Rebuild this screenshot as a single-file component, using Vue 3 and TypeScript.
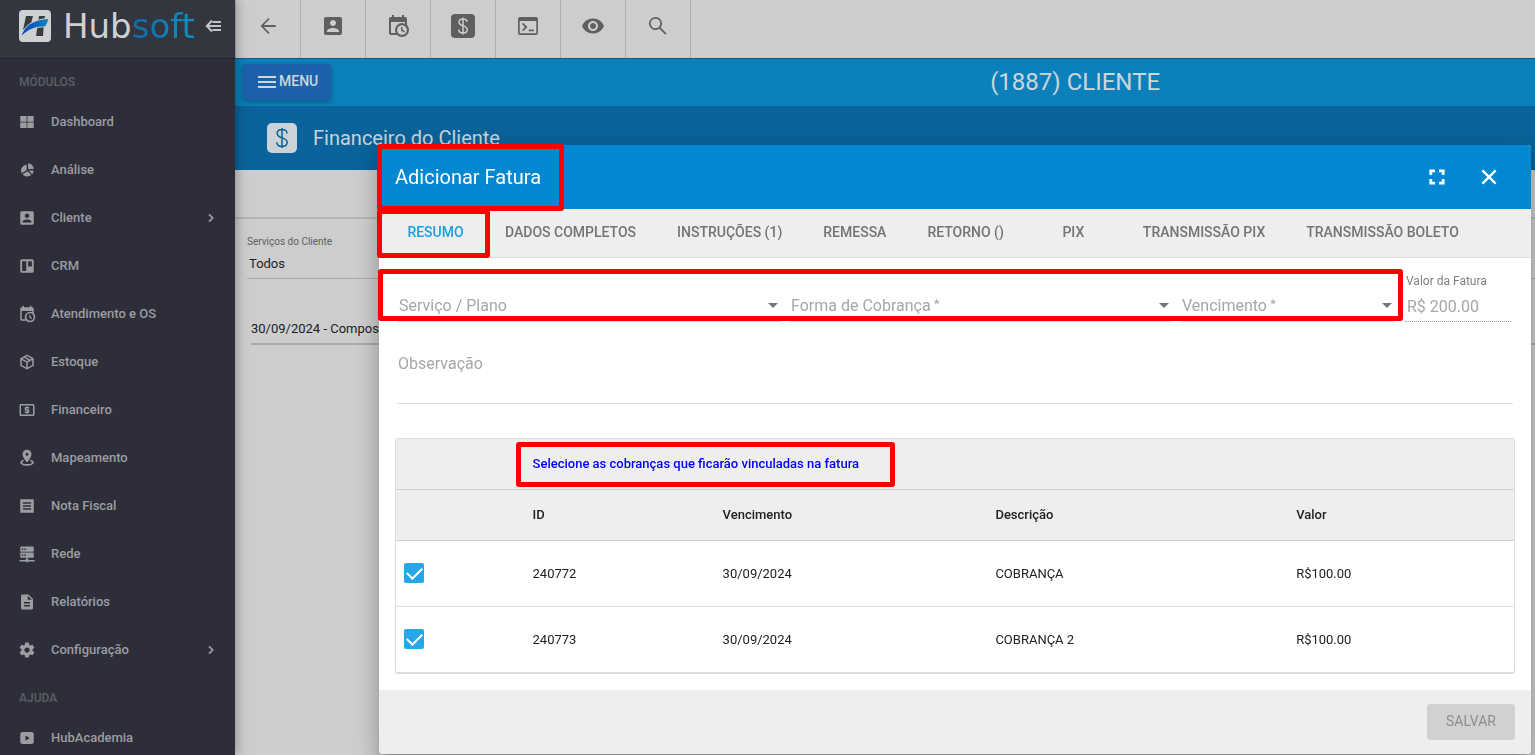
<script setup lang="ts">
import { ref } from 'vue'

interface NavItem {
  label: string
  icon: string
  expandable?: boolean
}

interface Charge {
  id: number
  due: string
  description: string
  amount: string
  selected: boolean
}

const icons: Record<string, string> = {
  dashboard: 'M3 4h8.500v7.500H3zM12.500 4H21v7.500h-8.500zM3 12.500h8.500V20H3zM12.500 12.500H21V20h-8.500z',
  chart: 'M13.500 3v7.500H21A8 8 0 0 0 13.500 3M11.500 4.500v7.800l-6.700 3.900A8.300 8.300 0 0 1 11.500 4.500M13 13.500l4.800 5.300A8.500 8.500 0 0 1 5.800 17.700zM14.500 12.500h6.300a8.500 8.500 0 0 1-2 5z',
  account:
    'M3 5v14c0 1.100.890 2 2 2h14c1.100 0 2-.900 2-2V5c0-1.100-.900-2-2-2H5c-1.110 0-2 .900-2 2zm12 4c0 1.660-1.340 3-3 3s-3-1.340-3-3 1.340-3 3-3 3 1.340 3 3zm-9 8c0-2 4-3.100 6-3.100s6 1.100 6 3.100v1H6v-1z',
  board:
    'M5 3h14a2 2 0 0 1 2 2v14a2 2 0 0 1-2 2H5a2 2 0 0 1-2-2V5a2 2 0 0 1 2-2zM5.500 5.500v13h5.500v-13zM13.500 5.500v7h5v-7z',
  calendar:
    'M15,13H16.5V15.82L18.94,17.23L18.19,18.53L15,16.69V13M19,8H5V19H9.67C9.24,18.09 9,17.07 9,16A7,7 0 0,1 16,9C17.07,9 18.09,9.24 19,9.67V8M5,21C3.89,21 3,20.1 3,19V5C3,3.89 3.89,3 5,3H6V1H8V3H16V1H18V3H19A2,2 0 0,1 21,5V11.1C22.24,12.36 23,14.09 23,16A7,7 0 0,1 16,23C14.09,23 12.36,22.24 11.1,21H5M16,11.15A4.85,4.85 0 0,0 11.15,16C11.15,18.68 13.32,20.85 16,20.85A4.85,4.85 0 0,0 20.85,16C20.85,13.32 18.68,11.15 16,11.15Z',
  box: 'M21,16.5C21,16.88 20.79,17.21 20.47,17.38L12.57,21.82C12.41,21.94 12.21,22 12,22C11.79,22 11.59,21.94 11.43,21.82L3.53,17.38C3.21,17.21 3,16.88 3,16.5V7.5C3,7.12 3.21,6.79 3.53,6.62L11.43,2.18C11.59,2.06 11.79,2 12,2C12.21,2 12.41,2.06 12.57,2.18L20.47,6.62C20.79,6.79 21,7.12 21,7.5V16.5M12,4.15L10.11,5.22L16,8.61L17.96,7.5L12,4.15M6.04,7.5L12,10.85L13.96,9.75L8.08,6.35L6.04,7.5M5,15.91L11,19.29V12.58L5,9.21V15.91M19,15.91V9.21L13,12.58V19.29L19,15.91Z',
  cash: 'M11 17h2v-1h1c.55 0 1-.45 1-1v-3c0-.55-.45-1-1-1h-3v-1h4V8h-2V7h-2v1h-1c-.55 0-1 .45-1 1v3c0 .55.45 1 1 1h3v1H9v2h2v1zm9-13H4c-1.110 0-1.990.890-1.990 2L2 18c0 1.110.890 2 2 2h16c1.110 0 2-.890 2-2V6c0-1.110-.890-2-2-2zm0 14H4V6h16v12z',
  pin: 'M12 1a6 6 0 0 0-6 6C6 11.500 12 18 12 18s6-6.500 6-11a6 6 0 0 0-6-6zm0 4a2 2 0 1 1 0 4 2 2 0 0 1 0-4zM7 14.200c-2.400.800-4 2.200-4 3.800 0 2.500 4 4.300 9 4.300s9-1.800 9-4.300c0-1.600-1.600-3-4-3.800l-1.200 1.700c1.900.500 2.700 1.200 2.700 2 0 1.200-3 2.200-6.500 2.200s-6.500-1-6.500-2.200c0-.800.800-1.500 2.700-2z',
  note: 'M3 3h18v18H3zM6.500 7v2h11V7zM6.500 11v2h11v-2zM6.500 15v2h11v-2z',
  server:
    'M4 2h16a1 1 0 0 1 1 1v5a1 1 0 0 1-1 1H4a1 1 0 0 1-1-1V3a1 1 0 0 1 1-1zM4 10h16a1 1 0 0 1 1 1v5a1 1 0 0 1-1 1h-7v2h1v1h8v2h-8l-1 1h-2l-1-1H2v-2h8v-1h1v-2H4a1 1 0 0 1-1-1v-5a1 1 0 0 1 1-1zM5 4.500v2h2v-2zM8.500 4.500v2h2v-2zM5 12.500v2h2v-2zM8.500 12.500v2h2v-2z',
  file: 'M14 2H6c-1.1 0-1.99.9-1.99 2L4 20c0 1.1.89 2 1.99 2H18c1.1 0 2-.9 2-2V8l-6-6zm2 16H8v-2h8v2zm0-4H8v-2h8v2zm-3-5V3.5L18.5 9H13z',
  gear: 'M19.43 12.98c.04-.32.07-.64.07-.98s-.03-.66-.07-.98l2.110-1.650c.190-.150.240-.420.120-.640l-2-3.460c-.120-.220-.390-.300-.610-.220l-2.490 1c-.520-.400-1.080-.730-1.690-.980l-.380-2.650C14.460 2.180 14.250 2 14 2h-4c-.250 0-.460.180-.490.420l-.380 2.650c-.610.250-1.170.590-1.690.980l-2.490-1c-.230-.090-.490 0-.610.220l-2 3.460c-.130.220-.070.490.120.640l2.110 1.650c-.040.320-.070.650-.070.980s.030.660.070.980l-2.110 1.650c-.190.150-.240.420-.120.640l2 3.460c.120.220.390.300.610.220l2.490-1c.520.400 1.080.730 1.690.980l.380 2.650c.030.240.240.420.490.420h4c.250 0 .460-.180.490-.420l.380-2.650c.610-.250 1.170-.590 1.690-.980l2.490 1c.230.090.490 0 .610-.220l2-3.460c.120-.220.070-.490-.120-.640l-2.110-1.650zM12 15.500c-1.930 0-3.500-1.570-3.500-3.500s1.570-3.500 3.500-3.500 3.500 1.570 3.500 3.500-1.570 3.500-3.500 3.500z',
  video: 'M6 4h12a3 3 0 0 1 3 3v10a3 3 0 0 1-3 3H6a3 3 0 0 1-3-3V7a3 3 0 0 1 3-3zM10 8.500v7l5.500-3.500z',
  back: 'M19.700 11.100H7.800l5.800-5.800-1.200-1.200L4.500 12l7.900 7.900 1.200-1.200-5.800-5.800h11.900z',
  terminal:
    'M4 3h16a2 2 0 0 1 2 2v14a2 2 0 0 1-2 2H4a2 2 0 0 1-2-2V5a2 2 0 0 1 2-2zM3.700 7v12.300h16.600V7zM7.200 8.800l4.300 4.200-4.300 4.200L6 16l3-3-3-3zM12.800 15.500h5v1.700h-5z',
  eye: 'M12 4.500C7 4.500 2.730 7.610 1 12c1.730 4.390 6 7.500 11 7.500s9.270-3.110 11-7.500c-1.730-4.390-6-7.500-11-7.500zM12 17c-2.760 0-5-2.240-5-5s2.240-5 5-5 5 2.240 5 5-2.240 5-5 5zm0-8c-1.660 0-3 1.340-3 3s1.340 3 3 3 3-1.340 3-3-1.340-3-3-3z',
  search:
    'M9.500 3a6.500 6.500 0 0 1 5.100 10.500l6 6-1.200 1.200-6-6A6.500 6.500 0 1 1 9.500 3zm0 1.700a4.800 4.800 0 1 0 0 9.600 4.800 4.800 0 0 0 0-9.600z',
  chevron: 'M8.200 16.600 12.800 12 8.200 7.400 10 5.600l6.400 6.400-6.400 6.400z',
  fullscreen: 'M7.200 14H4.400v5.600H10v-2.800H7.200zM4.400 10h2.800V7.200H10V4.400H4.400zM16.800 16.800H14v2.800h5.600V14h-2.800zM14 4.400v2.800h2.800V10h2.800V4.400z',
  close: 'M19.500 6.200 17.800 4.500 12 10.300 6.200 4.500 4.500 6.200 10.300 12 4.500 17.800 6.200 19.500 12 13.700 17.800 19.500 19.500 17.800 13.700 12z',
}

const modules: NavItem[] = [
  { label: 'Dashboard', icon: 'dashboard' },
  { label: 'Análise', icon: 'chart' },
  { label: 'Cliente', icon: 'account', expandable: true },
  { label: 'CRM', icon: 'board' },
  { label: 'Atendimento e OS', icon: 'calendar' },
  { label: 'Estoque', icon: 'box' },
  { label: 'Financeiro', icon: 'cash' },
  { label: 'Mapeamento', icon: 'pin' },
  { label: 'Nota Fiscal', icon: 'note' },
  { label: 'Rede', icon: 'server' },
  { label: 'Relatórios', icon: 'file' },
  { label: 'Configuração', icon: 'gear', expandable: true },
]
const help: NavItem[] = [{ label: 'HubAcademia', icon: 'video' }]
const sections = [
  { title: 'MÓDULOS', items: modules },
  { title: 'AJUDA', items: help },
]

const tools = [
  { label: 'Voltar', icon: 'back' },
  { label: 'Cliente', icon: 'account' },
  { label: 'Agenda', icon: 'calendar' },
  { label: 'Financeiro', icon: 'dollar' },
  { label: 'Terminal', icon: 'terminal' },
  { label: 'Visualizar', icon: 'eye' },
  { label: 'Pesquisar', icon: 'search' },
]

const tabs = [
  'RESUMO',
  'DADOS COMPLETOS',
  'INSTRUÇÕES (1)',
  'REMESSA',
  'RETORNO ()',
  'PIX',
  'TRANSMISSÃO PIX',
  'TRANSMISSÃO BOLETO',
]
const activeTab = ref(0)

const selects = [
  { id: 'servico', label: 'Serviço / Plano', required: false },
  { id: 'forma', label: 'Forma de Cobrança', required: true },
  { id: 'vencimento', label: 'Vencimento', required: true },
]

const amount = ref('R$ 200.00')
const note = ref('')

const charges = ref<Charge[]>([
  { id: 240772, due: '30/09/2024', description: 'COBRANÇA', amount: 'R$100.00', selected: true },
  { id: 240773, due: '30/09/2024', description: 'COBRANÇA 2', amount: 'R$100.00', selected: true },
])
</script>

<template>
  <div class="app">
    <aside class="sidebar">
      <header class="brand">
        <svg class="brand-mark" viewBox="0 0 32 32" aria-hidden="true">
          <defs>
            <linearGradient id="swoosh" x1="0" x2="1" y1="0" y2="0">
              <stop offset="0" stop-color="#0a3fc0" />
              <stop offset="1" stop-color="#0e86bd" />
            </linearGradient>
          </defs>
          <rect width="32" height="32" rx="4" fill="#cfd0d2" />
          <path d="M7 6h7l-2.400 9L4 20zM20 6h6l-1 6-1 14h-7l1.500-10z" fill="#3a3b3e" />
          <path d="M2 27C4 17 13 9 30 8.500c-1 4-2.500 6.500-4 8.500C18 16.500 9 19 2 27z" fill="url(#swoosh)" stroke="#cfd0d2" stroke-width="1" />
        </svg>
        <span class="brand-name">Hub<b>soft</b></span>
        <button class="collapse" type="button" aria-label="Recolher menu">
          <svg viewBox="0 0 18 14" fill="none" stroke="currentColor" stroke-width="2">
            <path d="M7 1.500 1.800 7 7 12.500M2 7h14M7.500 3H16M7.500 11H16" />
          </svg>
        </button>
      </header>
      <nav>
        <section v-for="section in sections" :key="section.title">
          <h2 class="nav-title">{{ section.title }}</h2>
          <a v-for="item in section.items" :key="item.label" class="nav-item" href="#">
            <svg class="nav-icon" viewBox="0 0 24 24" aria-hidden="true">
              <path :d="icons[item.icon]" fill-rule="evenodd" />
            </svg>
            <span class="nav-label">{{ item.label }}</span>
            <svg v-if="item.expandable" class="nav-chevron" viewBox="0 0 24 24" aria-hidden="true">
              <path :d="icons.chevron" />
            </svg>
          </a>
        </section>
      </nav>
    </aside>

    <main class="page">
      <div class="toolbar">
        <button v-for="tool in tools" :key="tool.label" class="tool" type="button" :aria-label="tool.label">
          <svg v-if="tool.icon === 'dollar'" viewBox="0 0 24 24">
            <rect width="24" height="24" rx="4" />
            <path class="coin" d="M12 3.500v17M16 8c0-1.900-1.700-3-4-3S8 6.200 8 8.200c0 4.500 8.300 2.800 8.300 7.300 0 2.200-1.900 3.500-4.300 3.500s-4.300-1.400-4.300-3.500" />
          </svg>
          <svg v-else viewBox="0 0 24 24">
            <path :d="icons[tool.icon]" fill-rule="evenodd" />
          </svg>
        </button>
      </div>

      <div class="client-bar">
        <button class="menu-button" type="button">
          <svg viewBox="0 0 18 12" aria-hidden="true"><path d="M0 0h18v2H0zM0 5h18v2H0zM0 10h18v2H0z" /></svg>
          <span>MENU</span>
        </button>
        <h1>(1887) CLIENTE</h1>
      </div>

      <div class="section-bar">
        <svg viewBox="0 0 30 30" aria-hidden="true">
          <rect width="30" height="30" rx="5" />
          <path d="M15 5v20M20 10.500c0-2.500-2.200-4-5-4s-4.800 1.500-4.800 3.900c0 5.600 10 3.400 10 8.900 0 2.700-2.300 4.200-5.200 4.200s-5.200-1.600-5.200-4.200" />
        </svg>
        <h2>Financeiro do Cliente</h2>
      </div>

      <div class="strip"></div>
      <div class="services">
        <label for="services">Serviços do Cliente</label>
        <select id="services">
          <option>Todos</option>
        </select>
        <p class="entry">30/09/2024 - Composta</p>
      </div>
    </main>

    <div class="overlay">
      <form class="dialog" role="dialog" aria-labelledby="dialog-title" @submit.prevent>
        <header class="dialog-header">
          <h2 id="dialog-title" class="marked">Adicionar Fatura</h2>
          <button type="button" aria-label="Tela cheia">
            <svg viewBox="0 0 24 24"><path :d="icons.fullscreen" /></svg>
          </button>
          <button type="button" aria-label="Fechar">
            <svg viewBox="0 0 24 24"><path :d="icons.close" /></svg>
          </button>
        </header>

        <div class="tabs" role="tablist">
          <button
            v-for="(tab, index) in tabs"
            :key="tab"
            type="button"
            role="tab"
            class="tab"
            :class="{ active: index === activeTab, marked: index === 0 }"
            :aria-selected="index === activeTab"
            @click="activeTab = index"
          >
            {{ tab }}
          </button>
        </div>

        <div class="dialog-body">
          <div class="fields">
            <div class="select-group marked">
              <div v-for="field in selects" :key="field.id" class="field">
                <select :id="field.id" :required="field.required"></select>
                <label :for="field.id">{{ field.label }}<small v-if="field.required"> *</small></label>
                <svg viewBox="0 0 10 5" aria-hidden="true"><path d="M0 0h10L5 5z" /></svg>
              </div>
            </div>
            <div class="amount">
              <label for="amount">Valor da Fatura</label>
              <input id="amount" v-model="amount" type="text" disabled />
            </div>
          </div>

          <textarea v-model="note" class="note" aria-label="Observação" placeholder="Observação" rows="2"></textarea>

          <div class="card">
            <table>
              <colgroup>
                <col class="c-check" />
                <col class="c-id" />
                <col class="c-due" />
                <col class="c-desc" />
                <col />
              </colgroup>
              <thead>
                <tr class="hint">
                  <th></th>
                  <th colspan="4"><span class="marked">Selecione as cobranças que ficarão vinculadas na fatura</span></th>
                </tr>
                <tr>
                  <th></th>
                  <th scope="col">ID</th>
                  <th scope="col">Vencimento</th>
                  <th scope="col">Descrição</th>
                  <th scope="col">Valor</th>
                </tr>
              </thead>
              <tbody>
                <tr v-for="charge in charges" :key="charge.id">
                  <td><input v-model="charge.selected" type="checkbox" :aria-label="`Cobrança ${charge.id}`" /></td>
                  <td>{{ charge.id }}</td>
                  <td>{{ charge.due }}</td>
                  <td>{{ charge.description }}</td>
                  <td>{{ charge.amount }}</td>
                </tr>
              </tbody>
            </table>
          </div>
        </div>

        <footer class="dialog-footer">
          <button type="submit" disabled>SALVAR</button>
        </footer>
      </form>
    </div>
  </div>
</template>

<style>
body {
  overflow: hidden;
  background: #cdcdcd;
}
</style>

<style scoped>
.app {
  display: flex;
  height: 100vh;
  overflow: hidden;
  font-family: Roboto, 'Liberation Sans', sans-serif;
  font-size: 13px;
  color: #212121;
}
.app * {
  box-sizing: border-box;
}
h1,
h2,
p {
  margin: 0;
  font-weight: 400;
}
button,
input,
select,
textarea {
  font: inherit;
  margin: 0;
  padding: 0;
  border: 0;
  border-radius: 0;
  background: none;
  color: inherit;
  outline: 0;
}
svg {
  display: block;
  flex: none;
  fill: currentColor;
}

/* Sidebar */
.sidebar {
  flex: none;
  width: 235px;
  overflow: hidden;
  background: #2d2e39;
  box-shadow: 0 0 12px rgba(0, 0, 0, 0.4);
  z-index: 1;
}
.brand {
  display: flex;
  align-items: center;
  height: 59px;
  padding: 0 12px 6px 19px;
  background: #33363f;
  border-bottom: 1px solid #22242b;
}
.brand-mark {
  width: 32px;
  height: 32px;
}
.brand-name {
  flex: 1;
  margin-left: 12px;
  font-family: 'DejaVu Sans', sans-serif;
  font-size: 34px;
  line-height: 40px;
  color: #cfd0d2;
}
.brand-name b {
  font-weight: 400;
  background: linear-gradient(90deg, #166aa8, #0f8fc0);
  background-clip: text;
  color: transparent;
}
.collapse {
  color: #c2c3c6;
}
.collapse svg {
  width: 18px;
  height: 14px;
  fill: none;
}
nav {
  margin-top: -2px;
}
.nav-title {
  height: 40px;
  padding: 8px 19px 0;
  font-size: 12px;
  font-weight: 500;
  line-height: 34px;
  color: #5d5f66;
}
.nav-item {
  display: flex;
  align-items: center;
  height: 48px;
  padding: 0 16px 0 18px;
  color: #9c9da1;
  font-weight: 500;
  text-decoration: none;
}
.nav-icon {
  width: 18px;
  height: 18px;
  margin-top: 2px;
}
.nav-label {
  flex: 1;
  margin-left: 15px;
}
.nav-chevron {
  width: 16px;
  height: 16px;
  margin-top: 2px;
}

/* Page */
.page {
  flex: 1;
  min-width: 0;
  background: #cdcdcd;
}
.toolbar {
  display: flex;
  height: 58px;
  border-left: 1px solid #b0b0b0;
}
.tool {
  display: flex;
  justify-content: center;
  width: 65px;
  padding-top: 14px;
  border-right: 1px solid #b0b0b0;
  color: #5f5f5f;
}
.tool svg {
  width: 24px;
  height: 24px;
}
.coin {
  fill: none;
  stroke: #cdcdcd;
  stroke-width: 1.5;
}
.client-bar {
  display: flex;
  align-items: center;
  height: 48px;
  padding: 0 0 2px 8px;
  background: #0c80ba;
  border-top: 1px solid #0b5c84;
  color: #cdd6db;
}
.client-bar h1 {
  flex: 1;
  padding-left: 284px;
  font-size: 24px;
  line-height: 32px;
  text-align: center;
}
.menu-button {
  display: flex;
  align-items: center;
  gap: 3px;
  height: 36px;
  padding: 0 13px 0 15px;
  border-radius: 3px;
  background: #1b62ab;
  box-shadow: 0 2px 5px rgba(0, 0, 0, 0.3);
  font-size: 14px;
  font-weight: 500;
}
.menu-button svg {
  width: 18px;
  height: 12px;
}
.menu-button span {
  padding-bottom: 2px;
}
.section-bar {
  display: flex;
  align-items: center;
  gap: 16px;
  height: 64px;
  padding-left: 32px;
  background: #0a639a;
  color: #ccd3d8;
}
.section-bar svg {
  width: 30px;
  height: 30px;
}
.section-bar path {
  fill: none;
  stroke: #0a639a;
  stroke-width: 1.5;
}
.section-bar h2 {
  font-size: 20px;
  line-height: 28px;
}
.strip {
  height: 49px;
  border-bottom: 2px solid #b5b5b5;
}
.services {
  display: flex;
  flex-direction: column;
  padding: 16px 0 0 12px;
}
.services label {
  font-size: 10px;
  line-height: 14px;
  color: #606060;
}
.services select {
  appearance: none;
  height: 30px;
  padding-left: 2px;
  border-bottom: 1px solid #a9a9a9;
}
.entry {
  height: 66px;
  margin-left: 4px;
  padding-top: 42px;
  border-bottom: 2px solid #a9a9a9;
  line-height: 16px;
}

/* Dialog */
.overlay {
  position: fixed;
  inset: 0;
  z-index: 2;
  display: flex;
  align-items: flex-start;
  padding: 145px 4px 0 379px;
}
.dialog {
  flex: 1;
  min-width: 0;
  border-radius: 4px;
  background: #fff;
  box-shadow:
    0 7px 8px -4px rgba(0, 0, 0, 0.2),
    0 13px 19px 2px rgba(0, 0, 0, 0.14),
    0 5px 24px 4px rgba(0, 0, 0, 0.12);
}
.marked {
  position: relative;
}
.marked::after {
  content: '';
  position: absolute;
  z-index: 1;
  border: 5px solid #f00;
  border-radius: 3px;
  pointer-events: none;
}
.dialog-header {
  display: flex;
  align-items: center;
  height: 64px;
  padding-right: 16px;
  border-radius: 4px 4px 0 0;
  background: #0288d1;
  color: #fff;
}
.dialog-header h2 {
  margin-right: auto;
  padding: 0 23px 0 16px;
  font-size: 20px;
  line-height: 64px;
}
.dialog-header h2::after {
  inset: -1px 0 -2px -2px;
}
.dialog-header button {
  display: flex;
  justify-content: center;
  width: 52px;
  padding: 12px 0;
}
.dialog-header svg {
  width: 24px;
  height: 24px;
}
.tabs {
  display: flex;
  gap: 1px;
  height: 49px;
  padding-left: 8px;
  border-bottom: 1px solid #dcdcdc;
  background: #eee;
}
.tab {
  min-width: 97px;
  padding: 0 20px 2px;
  color: #747474;
  font-size: 14px;
  font-weight: 500;
  white-space: nowrap;
}
.tab.active {
  color: #1a9fe3;
}
.tab.marked::after {
  inset: 0 -6px -1px -10px;
}
.dialog-body {
  padding: 11px 16px 16px;
}
.fields {
  display: grid;
  grid-template-columns: 998fr 106fr;
  gap: 10px;
  margin: 0 4px 0 2px;
}
.select-group {
  display: grid;
  grid-template-columns: 384fr 383fr 215fr;
  gap: 8px;
}
.select-group::after {
  inset: 0 -8px 1px -19px;
}
.field {
  display: flex;
  flex-direction: column;
  justify-content: flex-end;
  position: relative;
  height: 53px;
}
.field select {
  appearance: none;
  height: 32px;
  border-bottom: 1px solid #e0e0e0;
}
.field label {
  position: absolute;
  left: 2px;
  bottom: 6px;
  font-size: 16px;
  line-height: 20px;
  color: #a6a6a6;
  pointer-events: none;
}
.field small {
  font-size: 13px;
  vertical-align: top;
  line-height: 16px;
}
.field svg {
  position: absolute;
  right: 3px;
  bottom: 14px;
  width: 10px;
  height: 5px;
  color: #757575;
  pointer-events: none;
}
.amount {
  display: flex;
  flex-direction: column;
}
.amount label {
  padding: 4px 0 0 1px;
  font-size: 12px;
  line-height: 16px;
  color: #808080;
}
.amount input {
  width: 100%;
  height: 33px;
  padding: 2px 2px 0;
  border-bottom: 1px dotted #9a9a9a;
  font-size: 16px;
  color: #a6a6a6;
}
.note {
  display: block;
  width: calc(100% - 4px);
  height: 58px;
  margin: 24px 0 34px 2px;
  padding: 8px 1px;
  border-bottom: 1px solid #e0e0e0;
  font-size: 16px;
  line-height: 20px;
  resize: none;
}
.note::placeholder {
  color: #a6a6a6;
}
.card {
  border: 1px solid #dcdcdc;
  border-bottom-width: 2px;
  border-radius: 3px;
}
table {
  width: 100%;
  border-collapse: collapse;
  table-layout: fixed;
}
.c-check {
  width: 11.5%;
}
.c-id {
  width: 17%;
}
.c-due {
  width: 24.4%;
}
.c-desc {
  width: 26.9%;
}
th,
td {
  padding: 0 8px;
  text-align: left;
}
th {
  height: 51px;
  border-bottom: 1px solid #d0d0d0;
  background: #eee;
  font-weight: 500;
}
td {
  height: 66px;
  border-bottom: 1px solid #dedede;
}
tr:last-child td {
  border-bottom: 0;
}
.hint th {
  height: 50px;
  color: #00f;
}
.hint .marked::after {
  inset: -14px -36px -16px -17px;
}
td input {
  appearance: none;
  display: grid;
  place-items: center;
  width: 20px;
  height: 20px;
  border-radius: 2px;
  border: 2px solid #757575;
}
td input:checked {
  border-color: #27a7e8;
  background: #27a7e8;
}
td input:checked::before {
  content: '';
  width: 13px;
  height: 7px;
  margin-top: -4px;
  border: solid #fff;
  border-width: 0 0 2px 2px;
  rotate: -45deg;
}
.dialog-footer {
  display: flex;
  justify-content: flex-end;
  padding: 14px 16px;
  border-radius: 0 0 4px 4px;
  background: #eee;
}
.dialog-footer button {
  height: 36px;
  padding: 0 19px 2px;
  border-radius: 3px;
  background: #d1d1d1;
  color: #8e8e8e;
  font-size: 14px;
}
</style>
